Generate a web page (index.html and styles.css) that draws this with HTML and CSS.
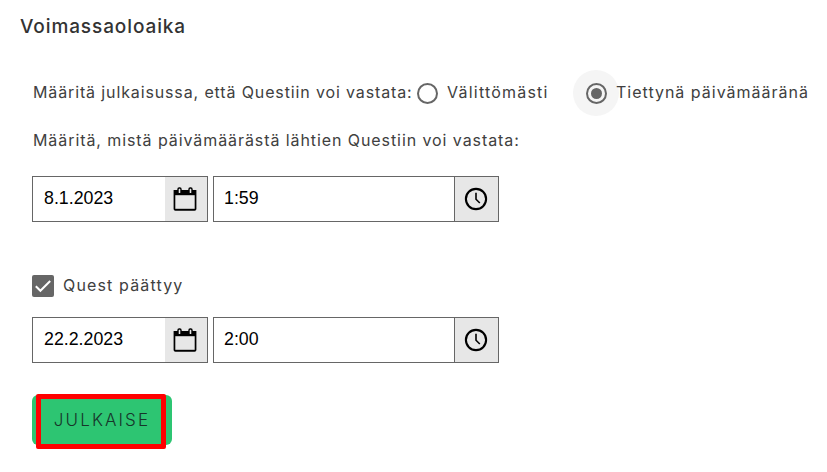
FILE: index.html
```html
<!DOCTYPE html>
<html lang="fi">
<head>
  <meta charset="UTF-8">
  <meta name="viewport" content="width=device-width, initial-scale=1.0">
  <title>Voimassaoloaika</title>
  <link rel="stylesheet" href="styles.css">
</head>
<body>
  <h1>Voimassaoloaika</h1>
  <div class="settings">
    <div class="choices">
      <span class="choices-label">Määritä julkaisussa, että Questiin voi vastata:</span>
      <span class="radio"></span>
      <span class="option-now">Välittömästi</span>
      <span class="halo"><span class="radio checked"></span></span>
      <span class="option-date">Tiettynä päivämääränä</span>
    </div>
    <p class="start-label">Määritä, mistä päivämäärästä lähtien Questiin voi vastata:</p>

    <div class="fields">
      <div class="date-field">
        <span class="value">8.1.2023</span>
        <span class="addon">
          <svg width="24" height="24" viewBox="0 0 24 24">
            <path d="M.6 3h22.8v19a1.8 1.8 0 0 1-1.8 1.8H2.4A1.8 1.8 0 0 1 .6 22z"/>
            <path class="cut" d="M2.3 8.2h19.4v13.6H2.3z"/>
            <rect class="ring" x="5" y="1" width="3" height="5.6" rx="1.2"/>
            <rect class="ring" x="16" y="1" width="3" height="5.6" rx="1.2"/>
          </svg>
        </span>
      </div>
      <div class="time-field">
        <span class="value">1:59</span>
        <span class="addon">
          <svg width="24" height="24" viewBox="0 0 24 24">
            <circle class="line" cx="12" cy="12" r="10.1"/>
            <path class="hand" d="M12 5.8v6.4l3.8 3.8"/>
          </svg>
        </span>
      </div>
    </div>

    <div class="ends">
      <span class="checkbox">
        <svg width="22" height="22" viewBox="0 0 22 22">
          <path d="M3.8 11.2l4.6 4.6 9.8-9.8"/>
        </svg>
      </span>
      <span class="ends-label">Quest päättyy</span>
    </div>

    <div class="fields">
      <div class="date-field">
        <span class="value">22.2.2023</span>
        <span class="addon">
          <svg width="24" height="24" viewBox="0 0 24 24">
            <path d="M.6 3h22.8v19a1.8 1.8 0 0 1-1.8 1.8H2.4A1.8 1.8 0 0 1 .6 22z"/>
            <path class="cut" d="M2.3 8.2h19.4v13.6H2.3z"/>
            <rect class="ring" x="5" y="1" width="3" height="5.6" rx="1.2"/>
            <rect class="ring" x="16" y="1" width="3" height="5.6" rx="1.2"/>
          </svg>
        </span>
      </div>
      <div class="time-field">
        <span class="value">2:00</span>
        <span class="addon">
          <svg width="24" height="24" viewBox="0 0 24 24">
            <circle class="line" cx="12" cy="12" r="10.1"/>
            <path class="hand" d="M12 5.8v6.4l3.8 3.8"/>
          </svg>
        </span>
      </div>
    </div>

    <div class="publish">
      <button class="btn">JULKAISE</button>
      <span class="highlight"></span>
    </div>
  </div>
</body>
</html>
```

FILE: styles.css
```css
/* Global Styles */
* {
  margin: 0;
  padding: 0;
  box-sizing: border-box;
}
body {
  font-family: Inter, "Open Sans", sans-serif;
  font-size: 16px;
  line-height: 24px;
  background: #fff;
  color: #404040;
  min-height: 472px;
  padding: 14px 0 0 20px;
}
h1 {
  font-size: 19px;
  font-weight: 500;
  letter-spacing: 0.9px;
  line-height: 26px;
  color: #333;
}
.settings {
  padding: 30px 0 0 12px;
}

/* Radio choices */
.choices {
  display: flex;
  align-items: center;
  height: 46px;
  white-space: nowrap;
}
.choices-label {
  width: 385px;
  padding-left: 1px;
  letter-spacing: 0.87px;
}
.radio {
  width: 21px;
  height: 21px;
  border: 2px solid #666;
  border-radius: 50%;
}
.radio.checked {
  display: flex;
  align-items: center;
  justify-content: center;
}
.radio.checked::before {
  content: "";
  width: 11px;
  height: 11px;
  border-radius: 50%;
  background: #666;
}
.option-now {
  width: 126px;
  margin-left: 9px;
  letter-spacing: 1.2px;
}
.choices-label,
.option-now,
.option-date,
.ends-label {
  padding-bottom: 2px;
}
.halo {
  display: flex;
  align-items: center;
  justify-content: center;
  width: 46px;
  height: 46px;
  border-radius: 50%;
  background: #f5f5f5;
}
.option-date {
  margin-left: -3px;
  letter-spacing: 1px;
}
.start-label {
  margin: 12px 0 24px;
  padding-left: 1px;
  letter-spacing: 0.92px;
}

/* Date and time fields */
.fields {
  display: flex;
  gap: 5px;
  height: 46px;
  font-family: "Liberation Sans", Arial, sans-serif;
  font-size: 17.8px;
  color: #000;
}
.date-field,
.time-field {
  display: flex;
  border: 1px solid #666;
}
.date-field {
  width: 176px;
}
.time-field {
  width: 286px;
}
.value {
  flex: 1;
  padding-left: 11px;
  line-height: 43px;
}
.time-field .value {
  padding-left: 10px;
  line-height: 42px;
}
.addon {
  display: flex;
  align-items: center;
  justify-content: center;
  width: 42px;
  padding-right: 2px;
  background: #e7e7e7;
}
.time-field .addon {
  width: 44px;
  border-left: 1px solid #666;
}
.cut {
  fill: #e7e7e7;
}
.ring {
  fill: #e7e7e7;
  stroke: #000;
  stroke-width: 1.4;
}
.line,
.hand {
  fill: none;
  stroke: #000;
  stroke-width: 2.1;
}
.hand {
  stroke-width: 1.6;
}

/* Checkbox */
.ends {
  display: flex;
  align-items: center;
  height: 22px;
  margin: 53px 0 20px;
}
.checkbox {
  width: 22px;
  height: 22px;
  border-radius: 2px;
  background: #666;
}
.checkbox svg {
  display: block;
  fill: none;
  stroke: #fff;
  stroke-width: 2;
}
.ends-label {
  margin-left: 9px;
  letter-spacing: 1.15px;
}

/* Publish button */
.publish {
  position: relative;
  width: 140px;
  height: 50px;
  margin-top: 32px;
}
.btn {
  display: block;
  width: 140px;
  height: 50px;
  border: none;
  border-radius: 6px;
  background: #2dc572;
  color: #17352a;
  font-family: Inter, "Open Sans", sans-serif;
  font-size: 17px;
  font-weight: 300;
  letter-spacing: 2.1px;
}
.highlight {
  position: absolute;
  top: -1px;
  left: 4px;
  width: 130px;
  height: 55px;
  border: 5px solid #f00;
  border-radius: 2px;
}
```
